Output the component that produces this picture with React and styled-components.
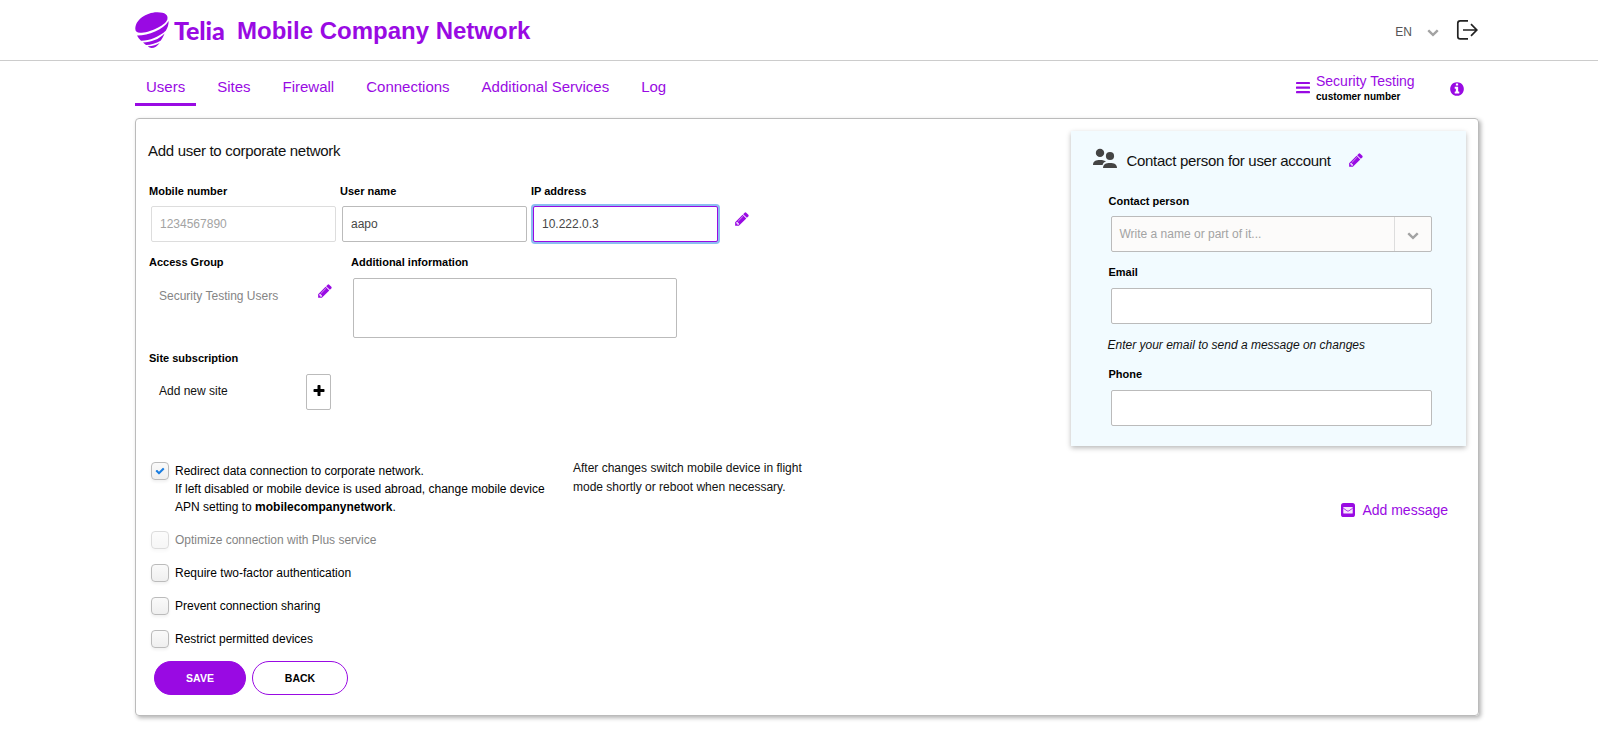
import React from 'react';
import styled, { createGlobalStyle, css } from 'styled-components';

const purple = '#990ae3';

const GlobalStyle = createGlobalStyle`
  * { box-sizing: border-box; }
  body { margin: 0; background: #fff; color: #111; font: 12px/18px "Liberation Sans", Arial, sans-serif; }
  input, textarea, button { font-family: inherit; }
`;

const Page = styled.div`
  height: 754px;
  overflow: hidden;
`;
const Header = styled.header`
  display: flex;
  align-items: center;
  height: 61px;
  padding: 0 120px 0 135px;
  border-bottom: 1px solid #ccc;
`;
const Brand = styled.div`
  display: flex;
  align-items: center;
  color: ${purple};
`;
const BrandName = styled.span`
  width: 52px;
  margin-left: 4px;
  font: 900 25px/30px Lato, sans-serif;
  letter-spacing: -0.1px;
  white-space: nowrap;
`;
const Title = styled.h1`
  margin: 2px 0 0 11px;
  font-size: 24px;
  line-height: 28px;
  font-weight: bold;
`;
const HeaderTools = styled.div`
  display: flex;
  align-items: center;
  margin-left: auto;
`;
const Language = styled.div`
  display: flex;
  align-items: center;
  gap: 15px;
  margin-right: 17px;
  padding-top: 3px;
  color: #555;
`;

const NavRow = styled.div`
  display: flex;
  justify-content: space-between;
  width: 1344px;
  height: 57px;
  margin-left: 135px;
`;
const Tabs = styled.nav`
  display: flex;
  gap: 10px;
`;
const Tab = styled.a`
  height: 45px;
  padding: 17px 11px 0;
  border-bottom: 3px solid ${p => (p.$active ? purple : 'transparent')};
  color: ${purple};
  font-size: 15px;
  line-height: 18px;
`;
const Account = styled.div`
  display: flex;
  padding: 10px 14px 0 0;
  color: ${purple};
`;
const AccountName = styled.div`
  width: 135px;
  margin-left: 6px;
  font-size: 14px;
  line-height: 20px;
`;
const AccountNote = styled.div`
  color: #000;
  font-size: 10px;
  font-weight: bold;
  line-height: 11px;
`;

const Panel = styled.main`
  display: flex;
  justify-content: space-between;
  width: 1344px;
  height: 598px;
  margin-left: 135px;
  padding: 12px 12px 20px;
  border: 1px solid #bbb;
  border-radius: 4px;
  box-shadow: 2px 2px 4px rgba(0, 0, 0, 0.3);
`;
const Form = styled.form`
  padding-top: 9px;
`;
const Heading = styled.h2`
  margin: 0;
  font-size: 15px;
  line-height: 21px;
  font-weight: normal;
  letter-spacing: -0.3px;
`;
const FieldRow = styled.div`
  display: flex;
  margin-top: ${p => p.$top || 12}px;
  padding-left: 1px;
`;
const FieldBox = styled.div`
  width: ${p => p.$width}px;
`;
const Label = styled.label`
  display: block;
  margin-bottom: ${p => p.$gap || 8}px;
  color: #000;
  font-size: 11px;
  line-height: 16px;
  font-weight: bold;
`;
const control = css`
  display: block;
  margin: 0 0 0 2px;
  border: 1px solid #bbb;
  border-radius: 2px;
  outline: none;
  background: #fff;
  color: #474747;
  font-size: 12px;
`;
const Input = styled.input`
  ${control}
  width: ${p => p.$width || 185}px;
  height: 36px;
  padding: 0 8px;
  &:disabled { border-color: #ddd; color: #a3a3a3; }
  ${p => p.$focused && css`
    border-color: ${purple};
    box-shadow: 0 0 0 2px rgba(25, 125, 225, 0.5);
  `}
`;
const TextArea = styled.textarea`
  ${control}
  width: 324px;
  height: 60px;
  resize: none;
`;
const Value = styled.div`
  display: flex;
  justify-content: space-between;
  width: 174px;
  margin-left: 10px;
  padding-top: ${p => p.$top}px;
  color: ${p => (p.$muted ? '#858585' : '#111')};
`;
const EditButton = styled.span`
  display: flex;
  margin: ${p => p.$margin};
  color: ${purple};
`;
const AddButton = styled.button`
  display: flex;
  align-items: center;
  justify-content: center;
  width: 25px;
  height: 36px;
  margin: -8px 2px 0 0;
  padding: 0 0 3px;
  border: 1px solid #bbb;
  border-radius: 2px;
  background: #fff;
  color: #000;
`;
const Options = styled.div`
  display: flex;
  margin-top: 48px;
  padding-left: 3px;
`;
const Checks = styled.div`
  display: grid;
  gap: 15px;
  width: 422px;
  padding-top: 4px;
`;
const CheckRow = styled.label`
  display: flex;
  gap: 6px;
  color: #000;
  white-space: nowrap;
  opacity: ${p => (p.$disabled ? 0.5 : 1)};
`;
const CheckBox = styled.span`
  display: flex;
  align-items: center;
  justify-content: center;
  width: 18px;
  height: 18px;
  border: 1px solid #bbb;
  border-radius: 4px;
  background: linear-gradient(#fafafa, #efefef);
  box-shadow: 0 2px 3px rgba(0, 0, 0, 0.06);
  color: #197de1;
`;
const Hint = styled.p`
  margin: 1px 0 0;
  line-height: 19px;
`;
const Actions = styled.div`
  display: flex;
  gap: 6px;
  margin-top: 13px;
  padding-left: 6px;
`;
const PillButton = styled.button`
  width: ${p => p.$width}px;
  height: 34px;
  padding: 0;
  border: 1px solid ${purple};
  border-radius: 17px;
  background: ${p => (p.$primary ? purple : '#fff')};
  color: ${p => (p.$primary ? '#fff' : '#000')};
  font-size: 10.5px;
  font-weight: bold;
`;

const Side = styled.aside`
  display: flex;
  flex-direction: column;
  width: 395px;
`;
const Card = styled.section`
  height: 315px;
  padding: 17px 0 0 22px;
  background: #f2fbff;
  box-shadow: 0 2px 5px rgba(0, 0, 0, 0.28);
`;
const CardHead = styled.div`
  display: flex;
`;
const CardHeading = styled(Heading)`
  width: 221px;
  margin: 2px 0 0 9.5px;
`;
const CardFields = styled.div`
  padding: 22px 0 0 15.5px;
`;
const CardField = styled.div`
  margin-bottom: 12px;
`;
const ComboBox = styled.div`
  display: flex;
  width: 321px;
  height: 36px;
  margin-left: 2px;
  border: 1px solid #bbb;
  border-radius: 2px;
  background: #fcfbfa;
  color: #a3a3a3;
`;
const ComboText = styled.span`
  flex: 1;
  padding: 8px;
`;
const ComboArrow = styled.span`
  display: flex;
  align-items: center;
  justify-content: center;
  width: 37px;
  padding-top: 1px;
  border-left: 1px solid #ddd;
`;
const Note = styled.p`
  margin: 0 0 12px -1px;
  font-style: italic;
`;
const AddMessage = styled.a`
  display: flex;
  align-items: center;
  gap: 7px;
  margin: 55px 18px 0 auto;
  color: ${purple};
  font-size: 14px;
`;

const Pencil = () => (
  <svg width="16" height="16" viewBox="0 0 1792 1792" fill="currentColor">
    <path d="M491 1536l91-91-235-235-91 91v107h128v128h107zm523-928q0-22-22-22-10 0-17 7l-542 542q-7 7-7 17 0 22 22 22 10 0 17-7l542-542q7-7 7-17zm-54-192l416 416-832 832h-416v-416zm683 96q0 53-37 90l-166 166-416-416 166-165q36-38 90-38 53 0 91 38l235 234q37 39 37 91z" />
  </svg>
);
const Bars = () => (
  <svg width="14" height="12" viewBox="0 0 14 12" fill="currentColor">
    <rect width="14" height="2" rx=".4" />
    <rect y="4.5" width="14" height="2.3" rx=".4" />
    <rect y="9" width="14" height="2.2" rx=".4" />
  </svg>
);
const Info = () => (
  <svg width="16" height="16" viewBox="0 0 1792 1792" fill="currentColor">
    <path d="M1152 1376v-160q0-14-9-23t-23-9h-96v-512q0-14-9-23t-23-9h-320q-14 0-23 9t-9 23v160q0 14 9 23t23 9h96v320h-96q-14 0-23 9t-9 23v160q0 14 9 23t23 9h448q14 0 23-9t9-23zm-128-896v-160q0-14-9-23t-23-9h-192q-14 0-23 9t-9 23v160q0 14 9 23t23 9h192q14 0 23-9t9-23zm640 416q0 209-103 385.5t-279.5 279.5-385.5 103-385.5-103-279.5-279.5-103-385.5 103-385.5 279.5-279.5 385.5-103 385.5 103 279.5 279.5 103 385.5z" />
  </svg>
);
const Plus = () => (
  <svg width="14" height="14" viewBox="0 0 1792 1792" fill="currentColor">
    <path d="M1600 736v192q0 40-28 68t-68 28h-416v416q0 40-28 68t-68 28h-192q-40 0-68-28t-28-68v-416h-416q-40 0-68-28t-28-68v-192q0-40 28-68t68-28h416v-416q0-40 28-68t68-28h192q40 0 68 28t28 68v416h416q40 0 68 28t28 68z" />
  </svg>
);
const Check = () => (
  <svg width="10" height="10" viewBox="0 0 1792 1792" fill="currentColor">
    <path d="M1671 566q0 40-28 68l-724 724-136 136q-28 28-68 28t-68-28l-136-136-362-362q-28-28-28-68t28-68l136-136q28-28 68-28t68 28l294 295 656-657q28-28 68-28t68 28l136 136q28 28 28 68z" />
  </svg>
);
const Chevron = () => (
  <svg width="12" height="12" viewBox="0 0 1792 1792" fill="#a3a3a3">
    <path d="M1683 808l-742 741q-19 19-45 19t-45-19l-742-741q-19-19-19-45.5t19-45.5l166-165q19-19 45-19t45 19l531 531 531-531q19-19 45-19t45 19l166 165q19 19 19 45.5t-19 45.5z" />
  </svg>
);
const Logout = () => (
  <svg width="22" height="22" viewBox="0 0 22 22" fill="none" stroke="#222" strokeWidth="1.7">
    <path d="M12 1.8H4.2Q1.8 1.8 1.8 4.2V17.4Q1.8 19.8 4.2 19.8H12M7 11H20.8M15 5.2L20.8 11L15 16.8" />
  </svg>
);
const People = () => (
  <svg width="24" height="20" viewBox="0 0 24 20" fill="#444">
    <circle cx="7" cy="4.9" r="4.2" />
    <circle cx="17" cy="8" r="4.1" />
    <path d="M0 17C0 13.2 3 12 7 12C9.8 12 12 12.5 13 13.6C11 14.2 10 15.4 9.6 17Z" />
    <path d="M10 20C10 16.3 13 15 17 15C21 15 24 16.3 24 20Z" />
  </svg>
);
const MailSquare = () => (
  <svg width="14" height="14" viewBox="0 0 14 14">
    <rect width="14" height="14" rx="2.6" fill={purple} />
    <path d="M2.3 4H11.7V10Q11.7 10.6 11.1 10.6H2.9Q2.3 10.6 2.3 10Z" fill="#f6e5fd" />
    <path d="M2.3 5.2L6 7.8Q7 8.5 8 7.8L11.7 5.2" fill="none" stroke={purple} strokeWidth=".8" />
  </svg>
);
const Globe = () => (
  <svg width="35" height="37" viewBox="0 0 35 37" fill={purple}>
    <path d="M.3 17C0 8 11 .5 22 .3C30 .2 33.5 3 32.3 7.5C30 14 14 20.8 5 20.8C2 20.8 .5 19.5 .3 17Z" />
    <path d="M2 23.6C13 23.8 28 18 33.6 9C33.8 12.5 32.5 16 30.8 18.8C24 25 14 29 6 28.8C4.3 27.3 3 25.5 2 23.6Z" />
    <path d="M8 30.4C16 30.4 24 27.5 29.6 21.6C28.5 24.5 27 27 25.6 28.7C21 31.4 16 32.8 11 33Z" />
    <path d="M12.8 34.3C18 34 21.5 32.6 24.6 30.9C22.5 34 19.5 36 16.5 36C15.3 36 14 35.3 12.8 34.3Z" />
  </svg>
);

const tabs = ['Users', 'Sites', 'Firewall', 'Connections', 'Additional Services', 'Log'];

export default function App() {
  return (
    <Page>
      <GlobalStyle />
      <Header>
        <Brand>
          <Globe />
          <BrandName>Telia</BrandName>
          <Title>Mobile Company Network</Title>
        </Brand>
        <HeaderTools>
          <Language>EN <Chevron /></Language>
          <Logout />
        </HeaderTools>
      </Header>
      <NavRow>
        <Tabs>
          {tabs.map((name, i) => <Tab key={name} $active={i === 0}>{name}</Tab>)}
        </Tabs>
        <Account>
          <EditButton $margin="11px 0 0"><Bars /></EditButton>
          <AccountName>
            Security Testing
            <AccountNote>customer number</AccountNote>
          </AccountName>
          <EditButton $margin="10px 0 0 -2px"><Info /></EditButton>
        </Account>
      </NavRow>
      <Panel>
        <Form>
          <Heading>Add user to corporate network</Heading>
          <FieldRow $top={22}>
            <FieldBox $width={191}>
              <Label $gap={7}>Mobile number</Label>
              <Input disabled defaultValue="1234567890" />
            </FieldBox>
            <FieldBox $width={191}>
              <Label $gap={7}>User name</Label>
              <Input defaultValue="aapo" />
            </FieldBox>
            <FieldBox $width={191}>
              <Label $gap={7}>IP address</Label>
              <Input $focused defaultValue="10.222.0.3" />
            </FieldBox>
            <EditButton $margin="28px 0 0 12px"><Pencil /></EditButton>
          </FieldRow>
          <FieldRow>
            <FieldBox $width={202}>
              <Label>Access Group</Label>
              <Value $top={9} $muted>
                Security Testing Users
                <EditButton $margin="-4px 0 0"><Pencil /></EditButton>
              </Value>
            </FieldBox>
            <FieldBox $width={326}>
              <Label>Additional information</Label>
              <TextArea />
            </FieldBox>
          </FieldRow>
          <FieldRow>
            <FieldBox $width={202}>
              <Label>Site subscription</Label>
              <Value $top={8}>
                Add new site
                <AddButton type="button"><Plus /></AddButton>
              </Value>
            </FieldBox>
          </FieldRow>
          <Options>
            <Checks>
              <CheckRow>
                <CheckBox><Check /></CheckBox>
                <span>
                  Redirect data connection to corporate network.<br />
                  If left disabled or mobile device is used abroad, change mobile device<br />
                  APN setting to <b>mobilecompanynetwork</b>.
                </span>
              </CheckRow>
              <CheckRow $disabled><CheckBox />Optimize connection with Plus service</CheckRow>
              <CheckRow><CheckBox />Require two-factor authentication</CheckRow>
              <CheckRow><CheckBox />Prevent connection sharing</CheckRow>
              <CheckRow><CheckBox />Restrict permitted devices</CheckRow>
            </Checks>
            <Hint>
              After changes switch mobile device in flight<br />
              mode shortly or reboot when necessary.
            </Hint>
          </Options>
          <Actions>
            <PillButton type="button" $primary $width={92}>SAVE</PillButton>
            <PillButton type="button" $width={96}>BACK</PillButton>
          </Actions>
        </Form>
        <Side>
          <Card>
            <CardHead>
              <People />
              <CardHeading>Contact person for user account</CardHeading>
              <EditButton $margin="4px 0 0"><Pencil /></EditButton>
            </CardHead>
            <CardFields>
              <CardField>
                <Label $gap={7}>Contact person</Label>
                <ComboBox>
                  <ComboText>Write a name or part of it...</ComboText>
                  <ComboArrow><Chevron /></ComboArrow>
                </ComboBox>
              </CardField>
              <CardField>
                <Label>Email</Label>
                <Input $width={321} />
              </CardField>
              <Note>Enter your email to send a message on changes</Note>
              <CardField>
                <Label>Phone</Label>
                <Input $width={321} />
              </CardField>
            </CardFields>
          </Card>
          <AddMessage><MailSquare />Add message</AddMessage>
        </Side>
      </Panel>
    </Page>
  );
}
